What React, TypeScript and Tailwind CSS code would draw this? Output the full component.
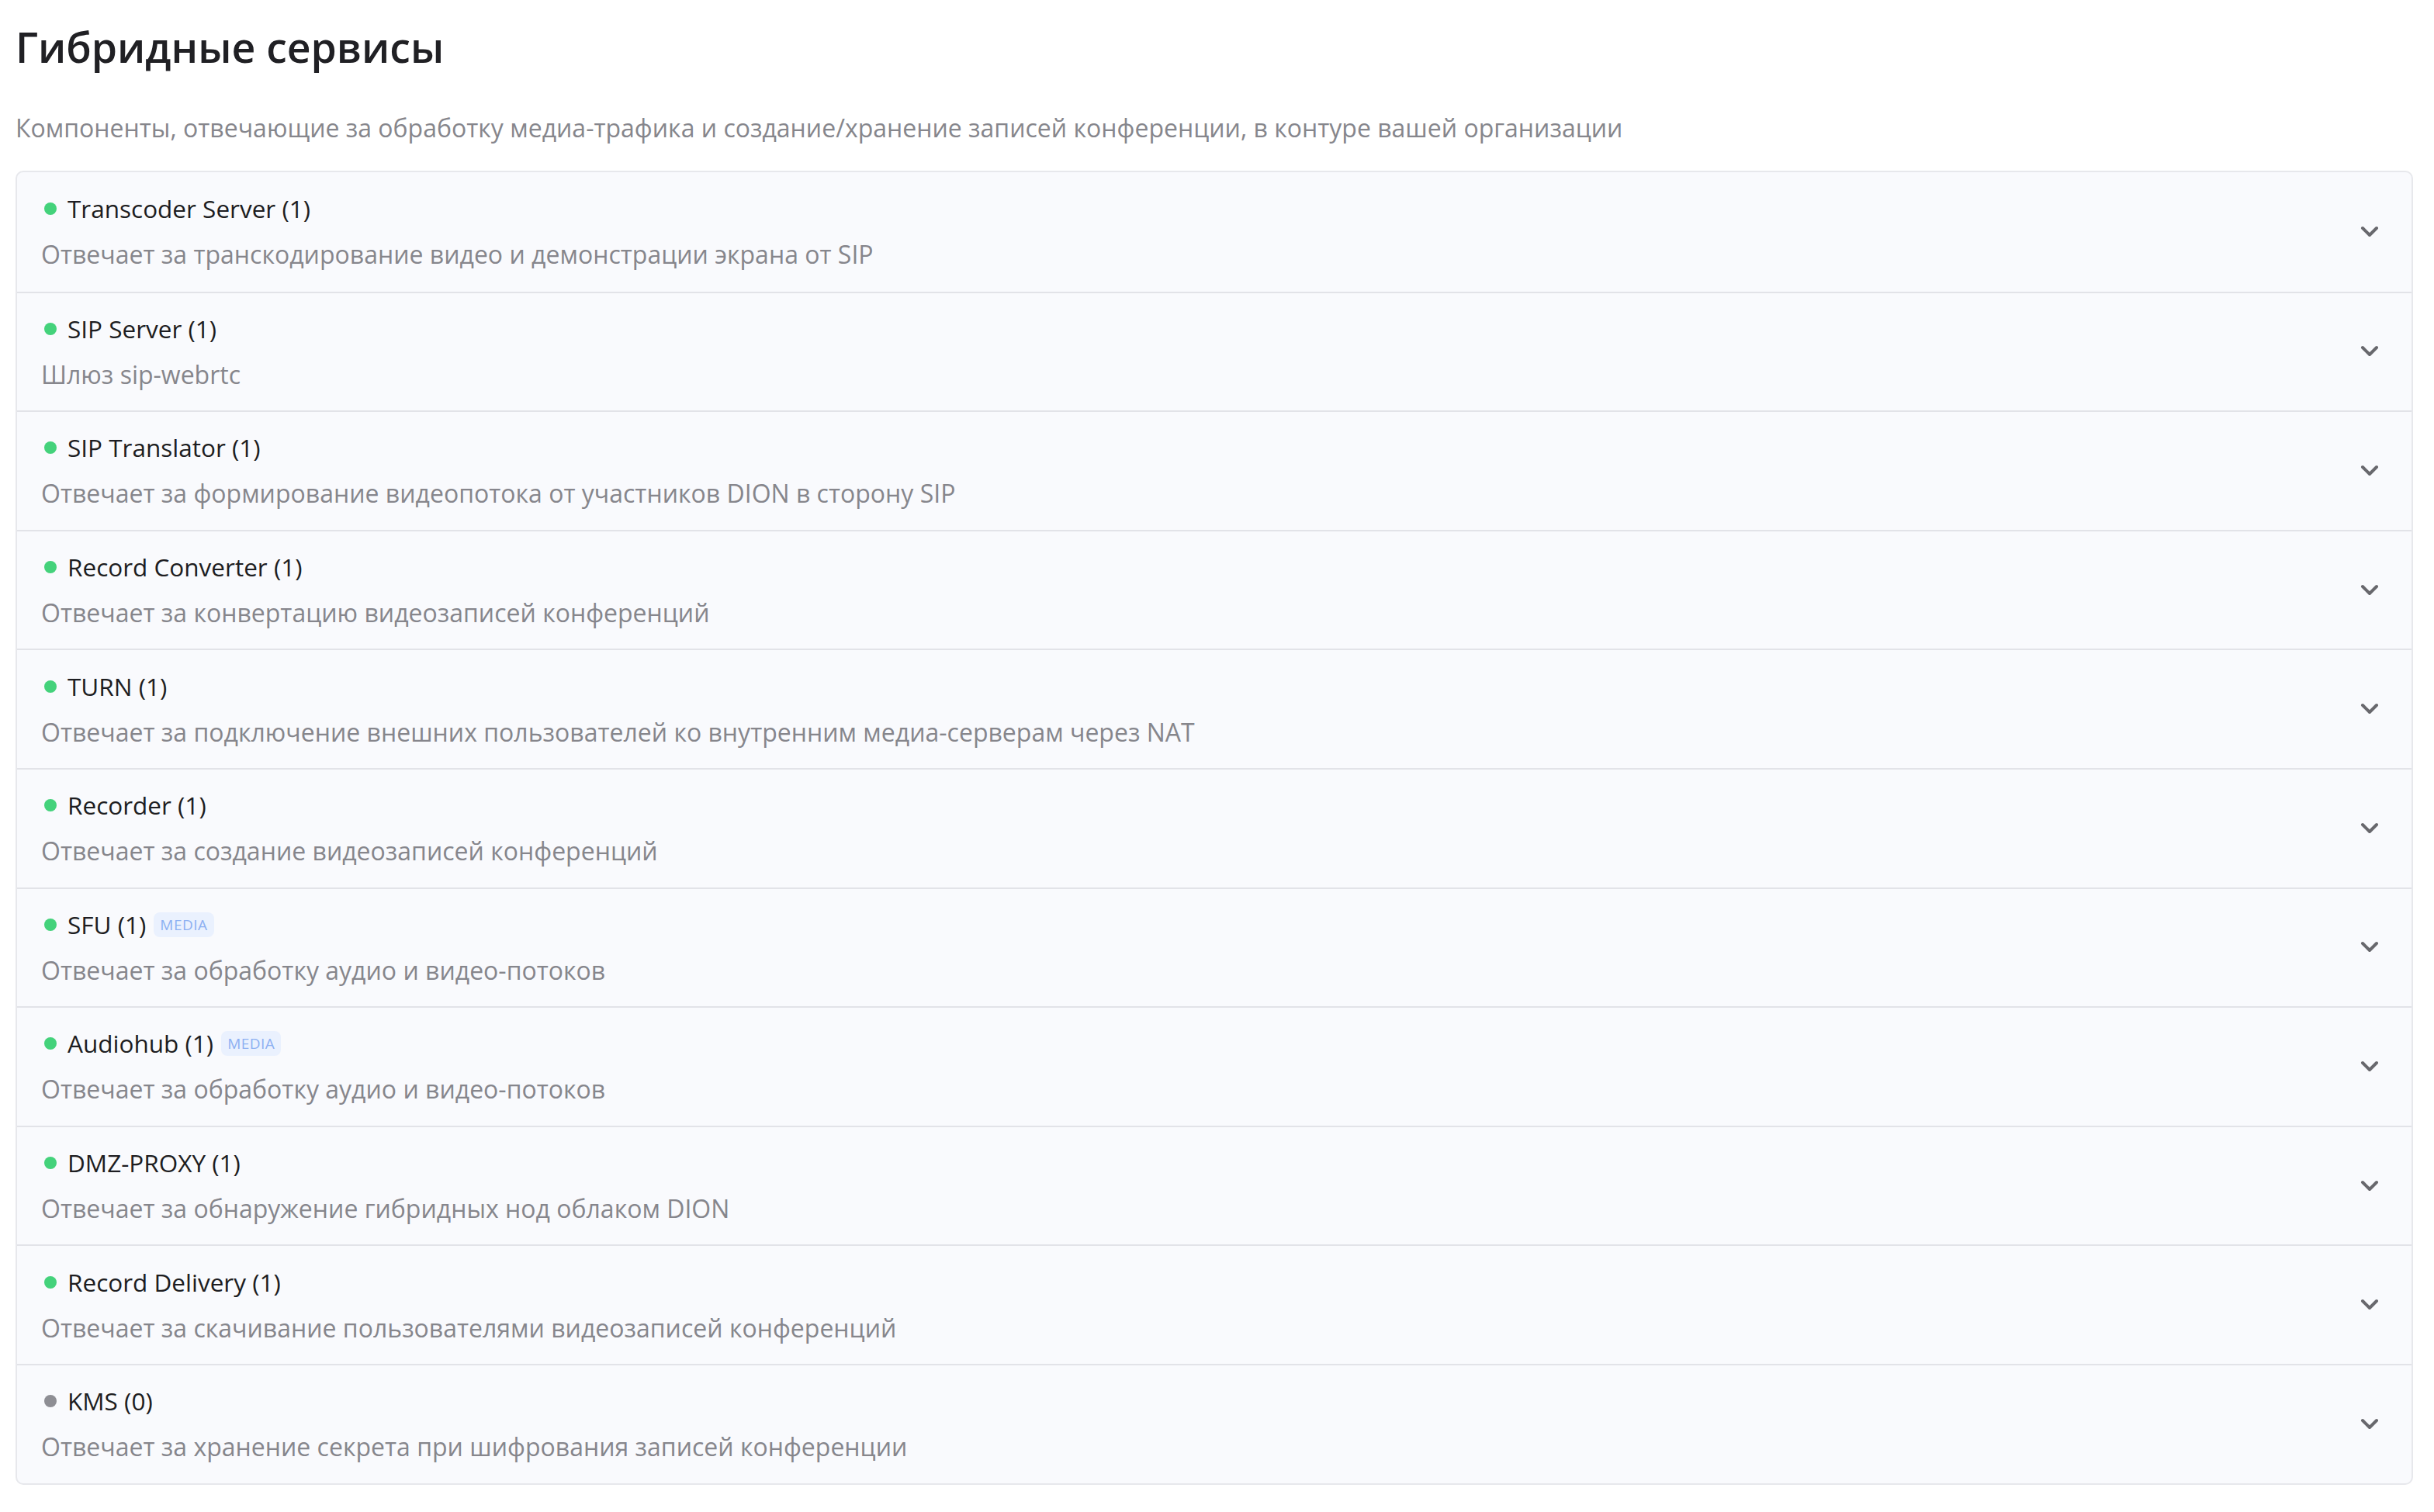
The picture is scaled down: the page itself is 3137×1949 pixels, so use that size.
const SERVICES = [
  { name: 'Transcoder Server', count: 1, text: 'Отвечает за транскодирование видео и демонстрации экрана от SIP' },
  { name: 'SIP Server', count: 1, text: 'Шлюз sip-webrtc' },
  { name: 'SIP Translator', count: 1, text: 'Отвечает за формирование видеопотока от участников DION в сторону SIP' },
  { name: 'Record Converter', count: 1, text: 'Отвечает за конвертацию видеозаписей конференций' },
  { name: 'TURN', count: 1, text: 'Отвечает за подключение внешних пользователей ко внутренним медиа-серверам через NAT' },
  { name: 'Recorder', count: 1, text: 'Отвечает за создание видеозаписей конференций' },
  { name: 'SFU', count: 1, text: 'Отвечает за обработку аудио и видео-потоков', media: true },
  { name: 'Audiohub', count: 1, text: 'Отвечает за обработку аудио и видео-потоков', media: true },
  { name: 'DMZ-PROXY', count: 1, text: 'Отвечает за обнаружение гибридных нод облаком DION' },
  { name: 'Record Delivery', count: 1, text: 'Отвечает за скачивание пользователями видеозаписей конференций' },
  { name: 'KMS', count: 0, text: 'Отвечает за хранение секрета при шифрования записей конференции' },
]

function Chevron() {
  return (
    <svg width="24" height="16" viewBox="0 0 24 16" fill="none" className="shrink-0">
      <polyline points="3,3 12,12 21,3" stroke="#68686d" strokeWidth="4" strokeLinecap="round" strokeLinejoin="round" />
    </svg>
  )
}

export default function App() {
  return (
    <div className="min-h-screen bg-white pl-5 pr-[27px] font-['Open_Sans',sans-serif]">
      <h1 className="pt-[29px] text-[53.5px] leading-[64px] font-semibold text-[#202024]">Гибридные сервисы</h1>
      <p className="mt-[52px] text-[32px] leading-[40px] text-[#86868c]">
        Компоненты, отвечающие за обработку медиа-трафика и создание/хранение записей конференции, в контуре вашей организации
      </p>

      <div className="mt-[35px] overflow-hidden rounded-[10px] border-2 border-[#e7e8ec] bg-[#f9fafd]">
        {SERVICES.map((s, i) => (
          <div
            key={s.name}
            className={`flex h-[153.6px] items-center justify-between pl-[31px] pr-[42px] ${i > 0 ? 'border-t-2 border-[#e2e3e8]' : ''}`}
          >
            <div className="flex flex-col gap-[19px]">
              <div className="flex h-[40px] items-center">
                <span className={`ml-[4px] mr-[14px] h-4 w-4 rounded-full ${s.count > 0 ? 'bg-[#44d27b]' : 'bg-[#8e8e94]'}`} />
                <span className="text-[31.5px] leading-[40px] text-[#1d1d21]">
                  {s.name} ({s.count})
                </span>
                {s.media && (
                  <span className="ml-[10px] flex h-[32px] items-center rounded-[8px] bg-[#eaf1fe] px-[8px] text-[19px] font-medium tracking-[0.5px] text-[#8db0f2]">
                    MEDIA
                  </span>
                )}
              </div>
              <div className="text-[32px] leading-[40px] text-[#86868c]">{s.text}</div>
            </div>
            <Chevron />
          </div>
        ))}
      </div>
    </div>
  )
}
